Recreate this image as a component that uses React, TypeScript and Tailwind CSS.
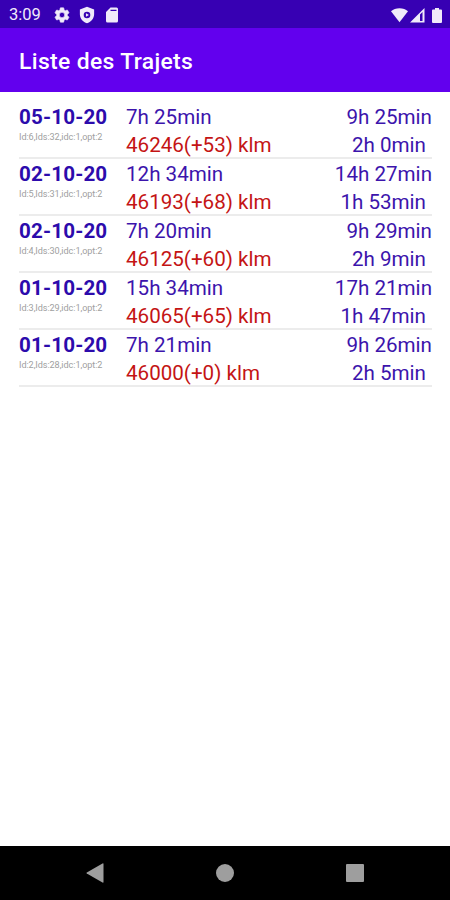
type Trajet = {
  date: string
  info: string
  depart: string
  arrivee: string
  km: string
  duree: string
}

const trajets: Trajet[] = [
  { date: "05-10-20", info: "Id:6,Ids:32,idc:1,opt:2", depart: "7h 25min", arrivee: "9h 25min", km: "46246(+53) klm", duree: "2h 0min" },
  { date: "02-10-20", info: "Id:5,Ids:31,idc:1,opt:2", depart: "12h 34min", arrivee: "14h 27min", km: "46193(+68) klm", duree: "1h 53min" },
  { date: "02-10-20", info: "Id:4,Ids:30,idc:1,opt:2", depart: "7h 20min", arrivee: "9h 29min", km: "46125(+60) klm", duree: "2h 9min" },
  { date: "01-10-20", info: "Id:3,Ids:29,idc:1,opt:2", depart: "15h 34min", arrivee: "17h 21min", km: "46065(+65) klm", duree: "1h 47min" },
  { date: "01-10-20", info: "Id:2,Ids:28,idc:1,opt:2", depart: "7h 21min", arrivee: "9h 26min", km: "46000(+0) klm", duree: "2h 5min" },
]

function StatusBar() {
  return (
    <div className="flex h-7 shrink-0 items-center bg-[#3700b3] pl-[9px] pr-[8px] pt-[2px] text-[#f0eafa]">
      <span className="w-[44px] pt-px text-[16.5px] leading-none">3:09</span>
      <svg className="h-[18px] w-[18px]" viewBox="0 0 24 24" fill="currentColor" stroke="currentColor" strokeWidth="0.8">
        <path d="M19.14 12.94c.04-.3.06-.61.06-.94s-.02-.64-.07-.94l2.03-1.58a.49.49 0 0 0 .12-.61l-1.92-3.32a.49.49 0 0 0-.59-.22l-2.39.96a7 7 0 0 0-1.62-.94l-.36-2.54A.48.48 0 0 0 13.92 2.4h-3.84a.48.48 0 0 0-.47.41l-.36 2.54c-.59.24-1.13.57-1.62.94l-2.39-.96a.48.48 0 0 0-.59.22L2.74 8.87a.48.48 0 0 0 .12.61l2.03 1.58a6 6 0 0 0-.02 1.88l-2.03 1.58a.49.49 0 0 0-.12.61l1.92 3.32c.12.22.37.29.59.22l2.39-.96c.5.38 1.03.7 1.62.94l.36 2.54c.05.24.24.41.48.41h3.84c.24 0 .44-.17.47-.41l.36-2.54a7 7 0 0 0 1.62-.94l2.39.96c.22.08.47 0 .59-.22l1.92-3.32a.48.48 0 0 0-.12-.61zM12 15.6a3.6 3.6 0 1 1 0-7.2 3.6 3.6 0 0 1 0 7.2z" />
      </svg>
      <svg className="ml-[7px] h-[18px] w-[18px]" viewBox="0 0 24 24" fill="currentColor" fillRule="evenodd">
        <path d="M12 1 2.500 4.700v6.300c0 5.550 4.340 10.740 9.500 12 5.160-1.260 9.500-6.450 9.500-12V4.700zM12 7.600a4.400 4.400 0 1 0 0 8.800 4.400 4.400 0 0 0 0-8.800z" />
        <path d="m10.600 9.600 4 2.400-4 2.400z" />
      </svg>
      <svg className="ml-[7px] h-[18px] w-[18px]" viewBox="0 0 24 24" fill="currentColor" fillRule="evenodd">
        <path d="M18 2h-8L4 8v12a2 2 0 0 0 2 2h12a2 2 0 0 0 2-2V4a2 2 0 0 0-2-2zM10 5h8v1.500h-8z" />
      </svg>
      <svg className="ml-auto h-[15px] w-[17px]" viewBox="0 0 17 15" fill="currentColor">
        <path d="M0 3.200C2.200 1.400 5.200.3 8.500.3s6.300 1.100 8.500 2.900L8.500 14.300z" />
      </svg>
      <svg className="ml-[2px] h-[15px] w-[15px]" viewBox="0 0 15 15" fill="currentColor" fillRule="evenodd">
        <path d="M0 14.500 14.500 0v14.500zM10 6.500v6.500h2.500V4z" />
      </svg>
      <svg className="ml-[7px] h-[15px] w-[10px]" viewBox="0 0 10 15" fill="currentColor">
        <path d="M3 0h4v1.500h2q1 0 1 1V14q0 1-1 1H1q-1 0-1-1V2.500q0-1 1-1h2z" />
      </svg>
    </div>
  )
}

function Ligne({ trajet }: { trajet: Trajet }) {
  return (
    <li className="flex h-[57px] border-b-2 border-[#ececec] pt-px text-[20.6px] leading-[28px] text-[#3c14ac]">
      <div className="w-[107px]">
        <p className="font-bold tracking-[0.15px] text-[#2c0bac]">{trajet.date}</p>
        <p className="-mt-px text-[9.1px] leading-[14px] tracking-[-0.07px] text-[#a0a0a0]">{trajet.info}</p>
      </div>
      <div className="flex-1">
        <p>{trajet.depart}</p>
        <p className="text-[#c41414]">{trajet.km}</p>
      </div>
      <div className="text-right">
        <p>{trajet.arrivee}</p>
        <p className="pr-[6px]">{trajet.duree}</p>
      </div>
    </li>
  )
}

export default function App() {
  return (
    <div className="flex h-[900px] w-[450px] flex-col overflow-hidden bg-white font-['Roboto',sans-serif]">
      <StatusBar />
      <header className="flex h-16 shrink-0 items-center bg-[#6200ee] px-[19px] pt-[5px]">
        <h1 className="text-[22.9px] font-medium tracking-[0.35px] text-white">Liste des Trajets</h1>
      </header>

      <ul className="flex-1 pl-[19px] pr-[18px] pt-[10px]">
        {trajets.map((trajet, index) => (
          <Ligne key={index} trajet={trajet} />
        ))}
      </ul>

      <nav className="flex h-[54px] shrink-0 items-center justify-between bg-black pl-[86px] pr-[86px] text-[#9e9e9e]">
        <svg className="h-[20px] w-[18px]" viewBox="0 0 18 20" fill="currentColor">
          <path d="M17.500 1v18q0 1-1 .5L.8 10.600q-.8-.6 0-1.200L16.500.5q1-.5 1 .5z" />
        </svg>
        <div className="h-[18px] w-[18px] rounded-full bg-[#9e9e9e]" />
        <div className="h-[18px] w-[18px] rounded-[1px] bg-[#9e9e9e]" />
      </nav>
    </div>
  )
}
